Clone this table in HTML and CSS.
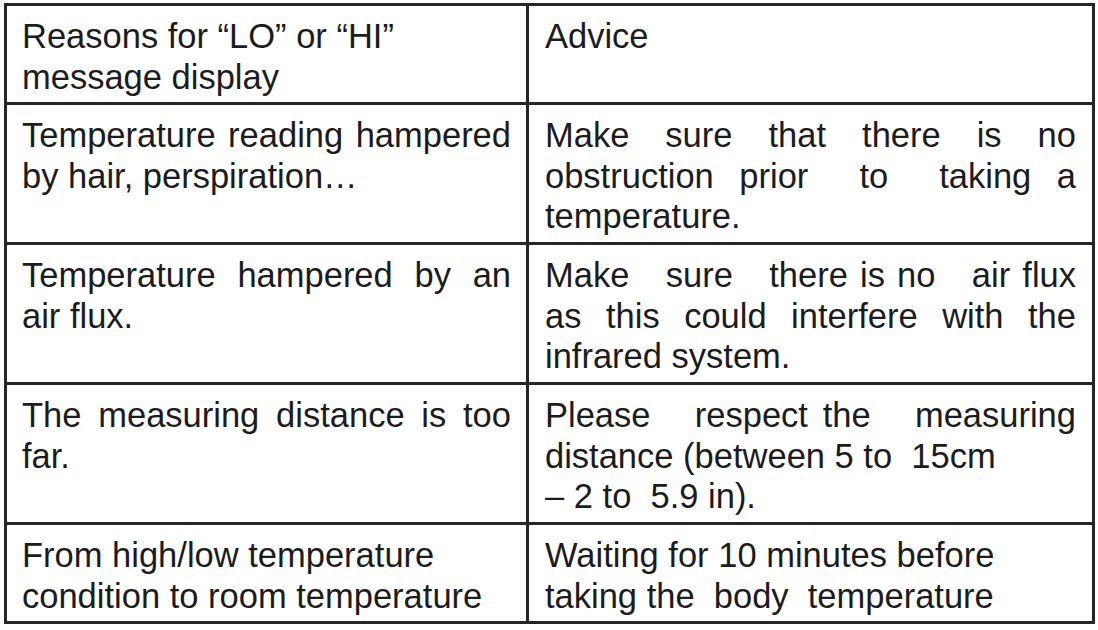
FILE: index.html
```html
<!DOCTYPE html>
<html lang="en">
<head>
<meta charset="utf-8">
<title>LO / HI message display</title>
<link rel="stylesheet" href="styles.css">
</head>
<body>
<div class="table">
  <div class="cell"><span class="ln">Reasons for “LO” or “HI”</span><span class="ln">message display</span></div>
  <div class="cell"><span class="ln">Advice</span></div>

  <div class="cell"><span class="ln j">Temperature reading hampered</span><span class="ln">by hair, perspiration…</span></div>
  <div class="cell"><span class="ln j">Make sure that there is no</span><span class="ln j">obstruction prior  to  taking a</span><span class="ln">temperature.</span></div>

  <div class="cell"><span class="ln j">Temperature hampered by an</span><span class="ln">air flux.</span></div>
  <div class="cell"><span class="ln j">Make   sure   there is no   air flux</span><span class="ln j">as this could interfere with the</span><span class="ln">infrared system.</span></div>

  <div class="cell"><span class="ln j">The measuring distance is too</span><span class="ln">far.</span></div>
  <div class="cell"><span class="ln j">Please   respect the   measuring</span><span class="ln pre">distance (between 5 to  15cm</span><span class="ln pre">– 2 to  5.9 in).</span></div>

  <div class="cell"><span class="ln">From high/low temperature</span><span class="ln">condition to room temperature</span></div>
  <div class="cell"><span class="ln">Waiting for 10 minutes before</span><span class="ln pre">taking the  body  temperature</span></div>
</div>
</body>
</html>
```

FILE: styles.css
```css
html, body {
  margin: 0;
  padding: 0;
  background: #ffffff;
}

body {
  padding: 3px 0 0 4px;
  font-family: "Liberation Sans", Arial, sans-serif;
  color: #1c1c1c;
}

.table {
  display: grid;
  grid-template-columns: 519px 563px;
  grid-template-rows: 96px 137px 137px 137px 96px;
  gap: 3px;
  padding: 3px;
  width: max-content;
  background: #262626;
}

.cell {
  background: #ffffff;
  padding-top: 10px;
  font-size: 34.5px;
  line-height: 40.5px;
}

.cell:nth-child(even) {
  padding-left: 16px;
  padding-right: 16px;
}

.cell:nth-child(odd) {
  padding-left: 15px;
  padding-right: 15px;
}

.ln {
  display: block;
  white-space: nowrap;
}

.ln.pre {
  white-space: pre;
}

.ln.j {
  white-space: pre-wrap;
  text-align: justify;
  text-align-last: justify;
}
```
